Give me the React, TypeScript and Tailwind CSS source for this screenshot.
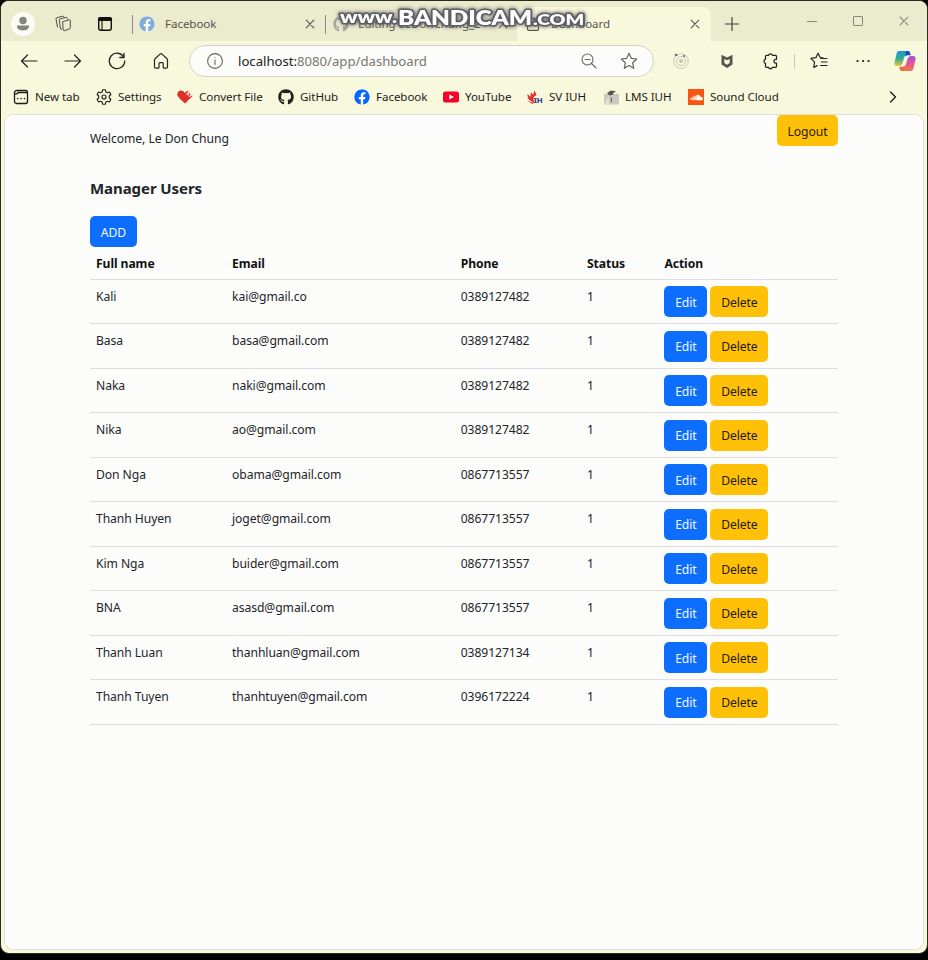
import React from 'react';
import { FaFacebook, FaGithub, FaSoundcloud } from 'react-icons/fa';

const users = [
  ['Kali', 'kai@gmail.co', '0389127482'],
  ['Basa', 'basa@gmail.com', '0389127482'],
  ['Naka', 'naki@gmail.com', '0389127482'],
  ['Nika', 'ao@gmail.com', '0389127482'],
  ['Don Nga', 'obama@gmail.com', '0867713557'],
  ['Thanh Huyen', 'joget@gmail.com', '0867713557'],
  ['Kim Nga', 'buider@gmail.com', '0867713557'],
  ['BNA', 'asasd@gmail.com', '0867713557'],
  ['Thanh Luan', 'thanhluan@gmail.com', '0389127134'],
  ['Thanh Tuyen', 'thanhtuyen@gmail.com', '0396172224'],
];

type IconProps = { size?: number; className?: string; sw?: number; box?: number; children: React.ReactNode };

function Icon({ size = 16, className = '', sw = 1.2, box = 16, children }: IconProps) {
  return (
    <svg width={size} height={size} viewBox={`0 0 ${box} ${box}`} fill="none" stroke="currentColor" strokeWidth={sw} strokeLinecap="round" strokeLinejoin="round" className={`shrink-0 ${className}`}>
      {children}
    </svg>
  );
}

const Close = ({ className = '' }: { className?: string }) => (
  <Icon size={10} box={10} sw={1.1} className={className}><path d="M1.2 1.2l7.6 7.6M8.8 1.2L1.2 8.8" /></Icon>
);

function TitleBar() {
  return (
    <div className="flex h-[40px] shrink-0 bg-[#ebebce] pt-[6px] text-[#55554c]">
      <div className="flex h-[34px] w-[131px] items-center text-[#222]">
        <svg width="24" height="24" viewBox="0 0 24 24" className="ml-[10px]">
          <circle cx="12" cy="12" r="12" fill="#fcfcf6" />
          <circle cx="12" cy="8.500" r="3.700" fill="#85857c" />
          <path d="M6 13.500h12v1c0 2.400-2.600 3.900-6 3.900s-6-1.500-6-3.900z" fill="#85857c" />
        </svg>
        <Icon size={18} box={18} sw={0.950} className="ml-[19px] text-[#444]">
          <path d="M9 6.500l6.500-1.700q.8-.1.800.7v7.300q0 .8-.8 1l-5 1.900q-1.200.3-1.300-.9zM6.500 13.500L5.300 5.200q0-1 .9-1.200L12 2.300q1 0 1.200 1l.2.700M3.500 12L2 3.900q-.1-1 .9-1.200L8.800 1.200q.8 0 1 .6M6.500 13.500l1.200.8" />
        </Icon>
        <svg width="16" height="16" viewBox="0 0 16 16" className="ml-[25px]">
          <rect x="1.700" y="1.700" width="12.600" height="12.600" rx="2.200" fill="none" stroke="#111" strokeWidth="1.400" />
          <path d="M1 5V3.300Q1 1 3.300 1h9.400Q15 1 15 3.300V5z" fill="#111" />
          <path d="M5 5v9" stroke="#111" strokeWidth="1.100" />
        </svg>
      </div>
      <div className="mt-2 h-[19px] w-px bg-[#8b8b80]" />
      <div className="flex h-[34px] w-[192px] items-center">
        <FaFacebook className="ml-[6px] size-4 shrink-0 rounded-full bg-white text-[#82aede]" />
        <span className="ml-[10px] text-[11.600px]">Facebook</span>
        <Close className="mr-[10px] ml-auto" />
      </div>
      <div className="mt-2 h-[19px] w-px bg-[#8b8b80]" />
      <div className="flex h-[34px] w-[191px] items-center">
        <FaGithub className="ml-[7px] size-4 shrink-0 text-[#a6a6a0]" />
        <span className="ml-[9px] w-[128px] overflow-hidden text-[11.600px] whitespace-nowrap">Editing LeDonChung_2</span>
        <Close className="mr-[9px] ml-auto" />
      </div>
      <div className="flex h-[34px] w-[194px] items-center rounded-t-lg bg-[#f8f8dd]">
        <Icon size={14} box={14} sw={1.200} className="ml-[9px]"><path d="M1.500 2.500q0-1.500 1.500-1.500H8l4.500 4.500V12q0 1.300-1.300 1.300H2.800q-1.300 0-1.300-1.300zM8 1v4.500h4.500" /></Icon>
        <span className="ml-[11px] text-[11.500px]">Dashboard</span>
        <Close className="mr-[11px] ml-auto" />
      </div>
      <div className="flex h-[34px] flex-1 items-center">
        <Icon size={14} box={14} sw={1.200} className="ml-[14px] text-[#444]"><path d="M7 .5v13M.5 7h13" /></Icon>
        <div className="mb-[6px] ml-[68px] h-px w-[10px] bg-[#87877c]" />
        <div className="mb-[6px] ml-[36px] size-[10px] rounded-[1px] border border-[#87877c]" />
        <Close className="mb-[6px] ml-[36px] text-[#87877c]" />
      </div>
    </div>
  );
}

function Toolbar() {
  return (
    <div className="flex h-[40px] shrink-0 items-center text-[#222]">
      <Icon size={18} box={18} className="ml-[19px]"><path d="M1.500 9h15.500M7.500 3L1.500 9l6 6" /></Icon>
      <Icon size={18} box={18} className="ml-[26px]"><path d="M1 9h15.500M10.500 3l6 6-6 6" /></Icon>
      <Icon size={18} box={18} sw={1.300} className="ml-[26px]"><path d="M15.800 5.300A7.700 7.700 0 1 0 16.700 9M16 1.300v4.200h-4.200" /></Icon>
      <Icon size={18} box={18} sw={1.200} className="ml-[26px]"><path d="M2.500 7.800q0-.7.500-1.100l5-4.600q1-.8 2 0l5 4.600q.5.400.5 1.100V15q0 1.200-1.200 1.200H12q-.8 0-.8-.8v-3.800q0-1-1-1H8q-1 0-1 1v3.800q0 .8-.8.800H3.700q-1.200 0-1.200-1.200z" /></Icon>
      <div className="ml-[19px] flex h-[32px] w-[465px] items-center rounded-full border border-[#d2d2c4] bg-[#fcfcfb]">
        <Icon size={16} sw={1.100} className="ml-[17px] text-[#66665e]"><circle cx="8" cy="8" r="7.400" /><path d="M8 7v4.500M8 4.500v.1" /></Icon>
        <span className="ml-[15px] text-[13.150px] tracking-normal text-[#77776c]"><span className="text-[#222]">localhost:</span>8080/app/dashboard</span>
        <Icon size={16} sw={1.100} className="ml-auto text-[#66665e]"><circle cx="6.500" cy="6.500" r="5.500" /><path d="M4 6.500h5M10.500 10.500l4.500 4.500" /></Icon>
        <Icon size={18} box={18} sw={1.200} className="mr-[15px] ml-[23px] text-[#66665e]"><path d="M9 1.300l2.300 5 5.400.7-4 3.800 1 5.500L9 13.600l-4.700 2.700 1-5.500-4-3.800 5.400-.7z" /></Icon>
      </div>
      <Icon size={18} box={18} sw={0.900} className="ml-[18px] text-[#c4c4ba]"><circle cx="9" cy="9" r="7.300" /><circle cx="9" cy="9" r="4.500" /><circle cx="9" cy="9" r="1.500" fill="#c4c4ba" /><circle cx="4" cy="3" r=".9" fill="#666" stroke="#666" /><circle cx="12" cy="4" r=".6" fill="#666" stroke="#666" /></Icon>
      <svg width="12" height="15" viewBox="0 0 12 15" className="ml-[31px] shrink-0"><path d="M.5.800L6 3.500 11.500.800v9.700L6 14 .500 10.500zM3.300 5v4L6 10.700 8.700 9V5L6 6.300z" fill="#55554f" fillRule="evenodd" /></svg>
      <Icon size={18} box={18} sw={1.250} className="ml-[28px]"><path d="M5.500 3.300h2a2.100 2.100 0 0 1 4 0h3q1 0 1 1v3h-.6a1.900 1.900 0 0 0 0 3.800h.6v3.200q0 1-1 1h-3a2.100 2.100 0 0 1-4 0h-2q-1 0-1-1v-2.900a2.200 2.200 0 0 1 0-4.200V4.300q0-1 1-1z" /></Icon>
      <div className="ml-[15px] h-[15px] w-px bg-[#c8c8bf]" />
      <Icon size={18} box={18} sw={1.200} className="ml-[15px]"><path d="M13 5.800h-2.600L8 1.200 5.900 5.700.9 6.400l3.700 3.700-.9 5.400 3.500-1.900M11 6.500h6M11.500 10h5.500M10.500 13.500H17" /></Icon>
      <Icon size={18} box={18} sw={2.200} className="ml-[26px]"><path d="M3.500 9h.1M9 9h.1M14.500 9h.1" /></Icon>
      <svg width="22" height="22" viewBox="0 0 22 22" className="ml-[22px] shrink-0">
        <defs>
          <linearGradient id="cpA" x1="0" y1="0" x2="0" y2="1"><stop stopColor="#1799d4" /><stop offset=".5" stopColor="#38a99b" /><stop offset="1" stopColor="#e2cb32" /></linearGradient>
          <linearGradient id="cpB" x1="0" y1="0" x2="0" y2="1"><stop stopColor="#a052d8" /><stop offset=".5" stopColor="#e9539b" /><stop offset="1" stopColor="#f47b49" /></linearGradient>
        </defs>
        <path d="M5 1h9q1.500 0 2 2l.6 2H13q-2 0-2.700 2l-2 6.500Q7.500 16 5.300 16H3Q0 16 .5 12.500L2.500 4Q3 1 5 1z" fill="url(#cpA)" />
        <path d="M11.500 1H14q1.500 0 2 2l.7 2.300h-3.200q-1.500 0-2 1.500z" fill="#1c4bb5" />
        <path d="M17 21H8q-1.500 0-2-2l-.6-2H9q2 0 2.700-2l2-6.500Q14.500 6 16.700 6H19q3 0 2.500 3.500l-2 8.500Q19 21 17 21z" fill="url(#cpB)" />
        <path d="M10.500 21H8q-1.500 0-2-2l-.7-2.300h3.200q1.500 0 2-1.500z" fill="#f16b38" />
      </svg>
    </div>
  );
}

function Mark({ icon, text, className }: { icon: React.ReactNode; text: string; className: string }) {
  return (
    <div className={`flex shrink-0 items-center whitespace-nowrap ${className}`}>
      <span className="flex w-[22px] shrink-0">{icon}</span>
      <span className="text-[11.600px]">{text}</span>
    </div>
  );
}

function Bookmarks() {
  return (
    <div className="flex h-[32px] shrink-0 items-center pl-[12px] text-[#1c1c1a]">
      <Mark className="w-[83px]" text="New tab" icon={<Icon sw={1.300}><rect x="1.500" y="1.500" width="13" height="13" rx="2" /><path d="M1.500 4.800h2.500l1-1.300h9M4.500 9.500h.3M8 9.500h.3M11.300 9.500h.3" /></Icon>} />
      <Mark className="w-[81px]" text="Settings" icon={<Icon sw={1.100}><circle cx="8" cy="8" r="2" /><path d="M6.600.8h2.800l.5 2.100 1.500.8 2-.7 1.500 2.500L13.300 7v2l1.600 1.500-1.500 2.500-2-.7-1.500.8-.5 2.100H6.600l-.5-2.100-1.500-.8-2 .7-1.500-2.500L2.700 9V7L1.100 5.500 2.600 3l2 .7 1.500-.8z" /></Icon>} />
      <Mark className="w-[101px]" text="Convert File" icon={<svg width="16" height="16" viewBox="0 0 16 16"><path d="M8 4Q5.500.5 2 2-.5 4 .7 7L3 10l5 4.500L15.500 7 12 2.500Q9.500 1 8 4z" fill="#df3029" /><path d="M9 5l3-3 3.500 4.500-3 1.500z" fill="#f5d9ce" /><path d="M11 6l2-2v3z" fill="#df3029" /></svg>} />
      <Mark className="w-[76px]" text="GitHub" icon={<FaGithub className="size-4 text-[#222]" />} />
      <Mark className="w-[89px]" text="Facebook" icon={<FaFacebook className="size-4 rounded-full bg-white text-[#0866ff]" />} />
      <Mark className="w-[84px]" text="YouTube" icon={<svg width="16" height="16" viewBox="0 0 16 16"><rect y="2.500" width="16" height="11" rx="2.500" fill="#f4002b" /><path d="M6.300 5.500v5L11 8z" fill="#fff" /></svg>} />
      <Mark className="w-[76px]" text="SV IUH" icon={<svg width="16" height="16" viewBox="0 0 16 16"><path d="M4 12Q0 10 .5 5l3 3Q3 5 4.500 3.500L6 6l1.500-4.500L9.500 6 8 7q-2 1-1.500 3l1 4z" fill="#df3029" /><path d="M0 10q3 4 7 3.500L6 15Q2 14 0 10z" fill="#df3029" /><text x="6.700" y="13.800" fontSize="7.500" fontWeight="800" fill="#30407c" textLength="9" lengthAdjust="spacingAndGlyphs">IH</text></svg>} />
      <Mark className="w-[85px]" text="LMS IUH" icon={<svg width="16" height="16" viewBox="0 0 16 16"><rect x="1" y="5" width="15" height="10.500" fill="#c9c9bd" /><path d="M4 4l4-2.500 5 .8-3 2 .5 1.200-4 1z" fill="#55554e" /><path d="M7.500 8.500h1.300v3l.7 1.500H8z" fill="#68685f" /><path d="M1 15.500L6 7v8.500z" fill="#e0e0d4" /></svg>} />
      <Mark className="w-[100px]" text="Sound Cloud" icon={<span className="flex size-4 items-center justify-center bg-[#f95512]"><FaSoundcloud className="size-[13px] text-white" /></span>} />
      <Icon size={12} box={12} sw={1.300} className="mr-[28px] ml-auto"><path d="M3.500 1l5 5-5 5" /></Icon>
    </div>
  );
}

const Btn = ({ primary = false, className, children }: { primary?: boolean; className: string; children: React.ReactNode }) => (
  <button className={`block h-[31px] shrink-0 rounded-[5px] pt-[2px] text-center text-[12.150px] ${primary ? 'bg-[#0d6efd] text-[#f4f8ff]' : 'bg-[#ffc107] text-[#1f1a05]'} ${className}`}>{children}</button>
);

const columns = 'grid grid-cols-[136px_228.700px_126.300px_77.400px_179.600px]';

function Dashboard() {
  return (
    <div className="mx-[3px] mt-px flex h-[836px] flex-col rounded-[9px] border border-[#dedede] bg-[#fcfcfb] pr-[83px] pl-[85px] text-[12.150px] text-[#212529]">
      <div className="flex h-[46px] w-[748px] justify-between">
        <div className="pt-[15px] tracking-[-0.04px]">Welcome, Le Don Chung</div>
        <Btn className="w-[61px]">Logout</Btn>
      </div>
      <h1 className="mt-[15px] h-[40px] text-[15px] leading-[24px] font-bold">Manager Users</h1>
      <Btn primary className="w-[47px]">ADD</Btn>
      <div className="w-[748px]">
        <div className={`${columns} h-[32.800px] border-b border-[#dedee2] pt-[8px] font-bold text-[#111]`}>
          {['Full name', 'Email', 'Phone', 'Status', 'Action'].map((h) => <div key={h} className="pl-[6px]">{h}</div>)}
        </div>
        {users.map(([name, email, phone]) => (
          <div key={name} className={`${columns} h-[44.530px] border-b border-[#dedee2]`}>
            <div className="pt-[8px] pl-[6px]">{name}</div>
            <div className="pt-[8px] pl-[6px]">{email}</div>
            <div className="pt-[8px] pl-[6px]">{phone}</div>
            <div className="pt-[8px] pl-[6px]">1</div>
            <div className="flex gap-[3px] pt-[6.400px] pl-[6px]">
              <Btn primary className="w-[43px]">Edit</Btn>
              <Btn className="w-[58px]">Delete</Btn>
            </div>
          </div>
        ))}
      </div>
    </div>
  );
}

function Watermark() {
  return (
    <svg width="262" height="32" viewBox="0 0 262 32" className="pointer-events-none absolute top-[1px] left-[330px] font-['Lato','Liberation_Sans',sans-serif]">
      <g fill="#fff" stroke="#5c5c64" strokeWidth="3" strokeLinejoin="round" paintOrder="stroke" fontWeight="800" className="drop-shadow-[0_0_2px_#55555a]">
        <text x="9" y="21" fontSize="17.500" textLength="57" lengthAdjust="spacingAndGlyphs">www.</text>
        <text x="67" y="22.500" fontSize="21" textLength="134" lengthAdjust="spacingAndGlyphs">BANDICAM</text>
        <text x="202" y="22.500" fontSize="14" textLength="51" lengthAdjust="spacingAndGlyphs">.COM</text>
      </g>
    </svg>
  );
}

export default function App() {
  return (
    <div className="h-[960px] w-[928px] overflow-hidden bg-black font-['Noto_Sans','Open_Sans',sans-serif] leading-[18px] tracking-[-0.07px]">
      <div className="relative flex h-[954px] w-[928px] flex-col overflow-hidden rounded-[9px] border border-[#2a2a25] bg-[#f8f8dd]">
        <TitleBar />
        <Toolbar />
        <Bookmarks />
        <Dashboard />
        <Watermark />
      </div>
    </div>
  );
}
